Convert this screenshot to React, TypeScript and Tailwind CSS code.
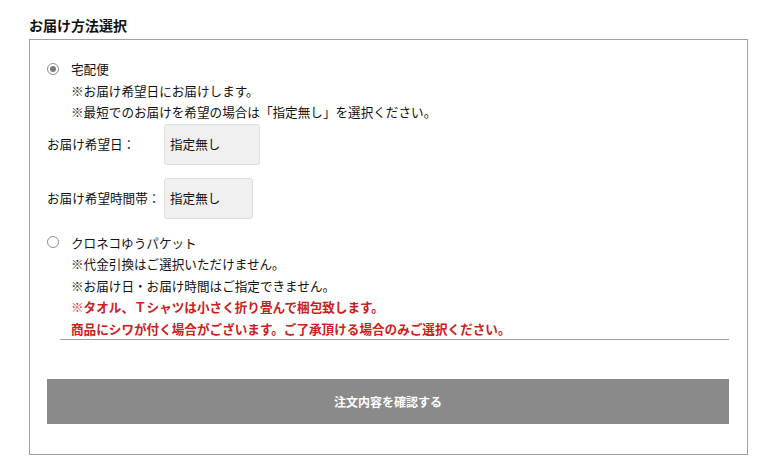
const font = "font-['Noto_Sans_CJK_JP','Noto_Sans',sans-serif]";

function Radio({ checked }: { checked?: boolean }) {
  return (
    <span className="flex h-[12px] w-[12px] shrink-0 items-center justify-center rounded-full border border-[#8f8f8f] bg-white">
      {checked && <span className="h-[6px] w-[6px] rounded-full bg-[#7a7a7a]" />}
    </span>
  );
}

function SelectBox({ width }: { width: string }) {
  return (
    <div
      className={`flex h-[41px] items-center rounded-[3px] border border-[#dcdcdc] bg-[#f0f0f0] pl-[5px] ${width}`}
    >
      指定無し
    </div>
  );
}

export default function App() {
  return (
    <div className={`${font} bg-white text-[12.6px] text-[#111] w-[761px] h-[474px]`}>
      <div className="pl-[29px] pt-[15px]">
        <h2 className="text-[14px] font-bold leading-[20px] text-[#111]">お届け方法選択</h2>
      </div>
      <div className="ml-[29px] mt-[4px] w-[719px] border border-[#a0a0a0] pb-[30px] pl-[17px] pr-[18px] pt-[18px]">
        <div className="leading-[21.5px]">
          <label className="flex items-center">
            <Radio checked />
            <span className="ml-[12px]">宅配便</span>
          </label>
          <div className="pl-[24px]">
            <p>※お届け希望日にお届けします。</p>
            <p>※最短でのお届けを希望の場合は「指定無し」を選択ください。</p>
          </div>
        </div>

        <div className="mt-[1px] flex flex-col gap-[13px]">
          <div className="flex items-center">
            <span className="w-[117px]">お届け希望日：</span>
            <SelectBox width="w-[96px]" />
          </div>
          <div className="flex items-center">
            <span className="w-[117px]">お届け希望時間帯：</span>
            <SelectBox width="w-[89px]" />
          </div>
        </div>

        <div className="mt-[13px] leading-[21.5px]">
          <label className="flex items-center">
            <Radio />
            <span className="ml-[12px]">クロネコゆうパケット</span>
          </label>
          <div className="pl-[24px]">
            <p>※代金引換はご選択いただけません。</p>
            <p>※お届け日・お届け時間はご指定できません。</p>
            <p className="font-bold text-[#cc2020]">※タオル、Ｔシャツは小さく折り畳んで梱包致します。</p>
            <p className="font-bold text-[#cc2020]">
              商品にシワが付く場合がございます。ご了承頂ける場合のみご選択ください。
            </p>
          </div>
        </div>

        <div className="ml-[13px] h-px bg-[#a0a0a0]" />

        <button className="mt-[39px] flex h-[45px] w-full items-center justify-center bg-[#8a8a8a] text-[12px] font-bold text-white">
          注文内容を確認する
        </button>
      </div>
    </div>
  );
}
